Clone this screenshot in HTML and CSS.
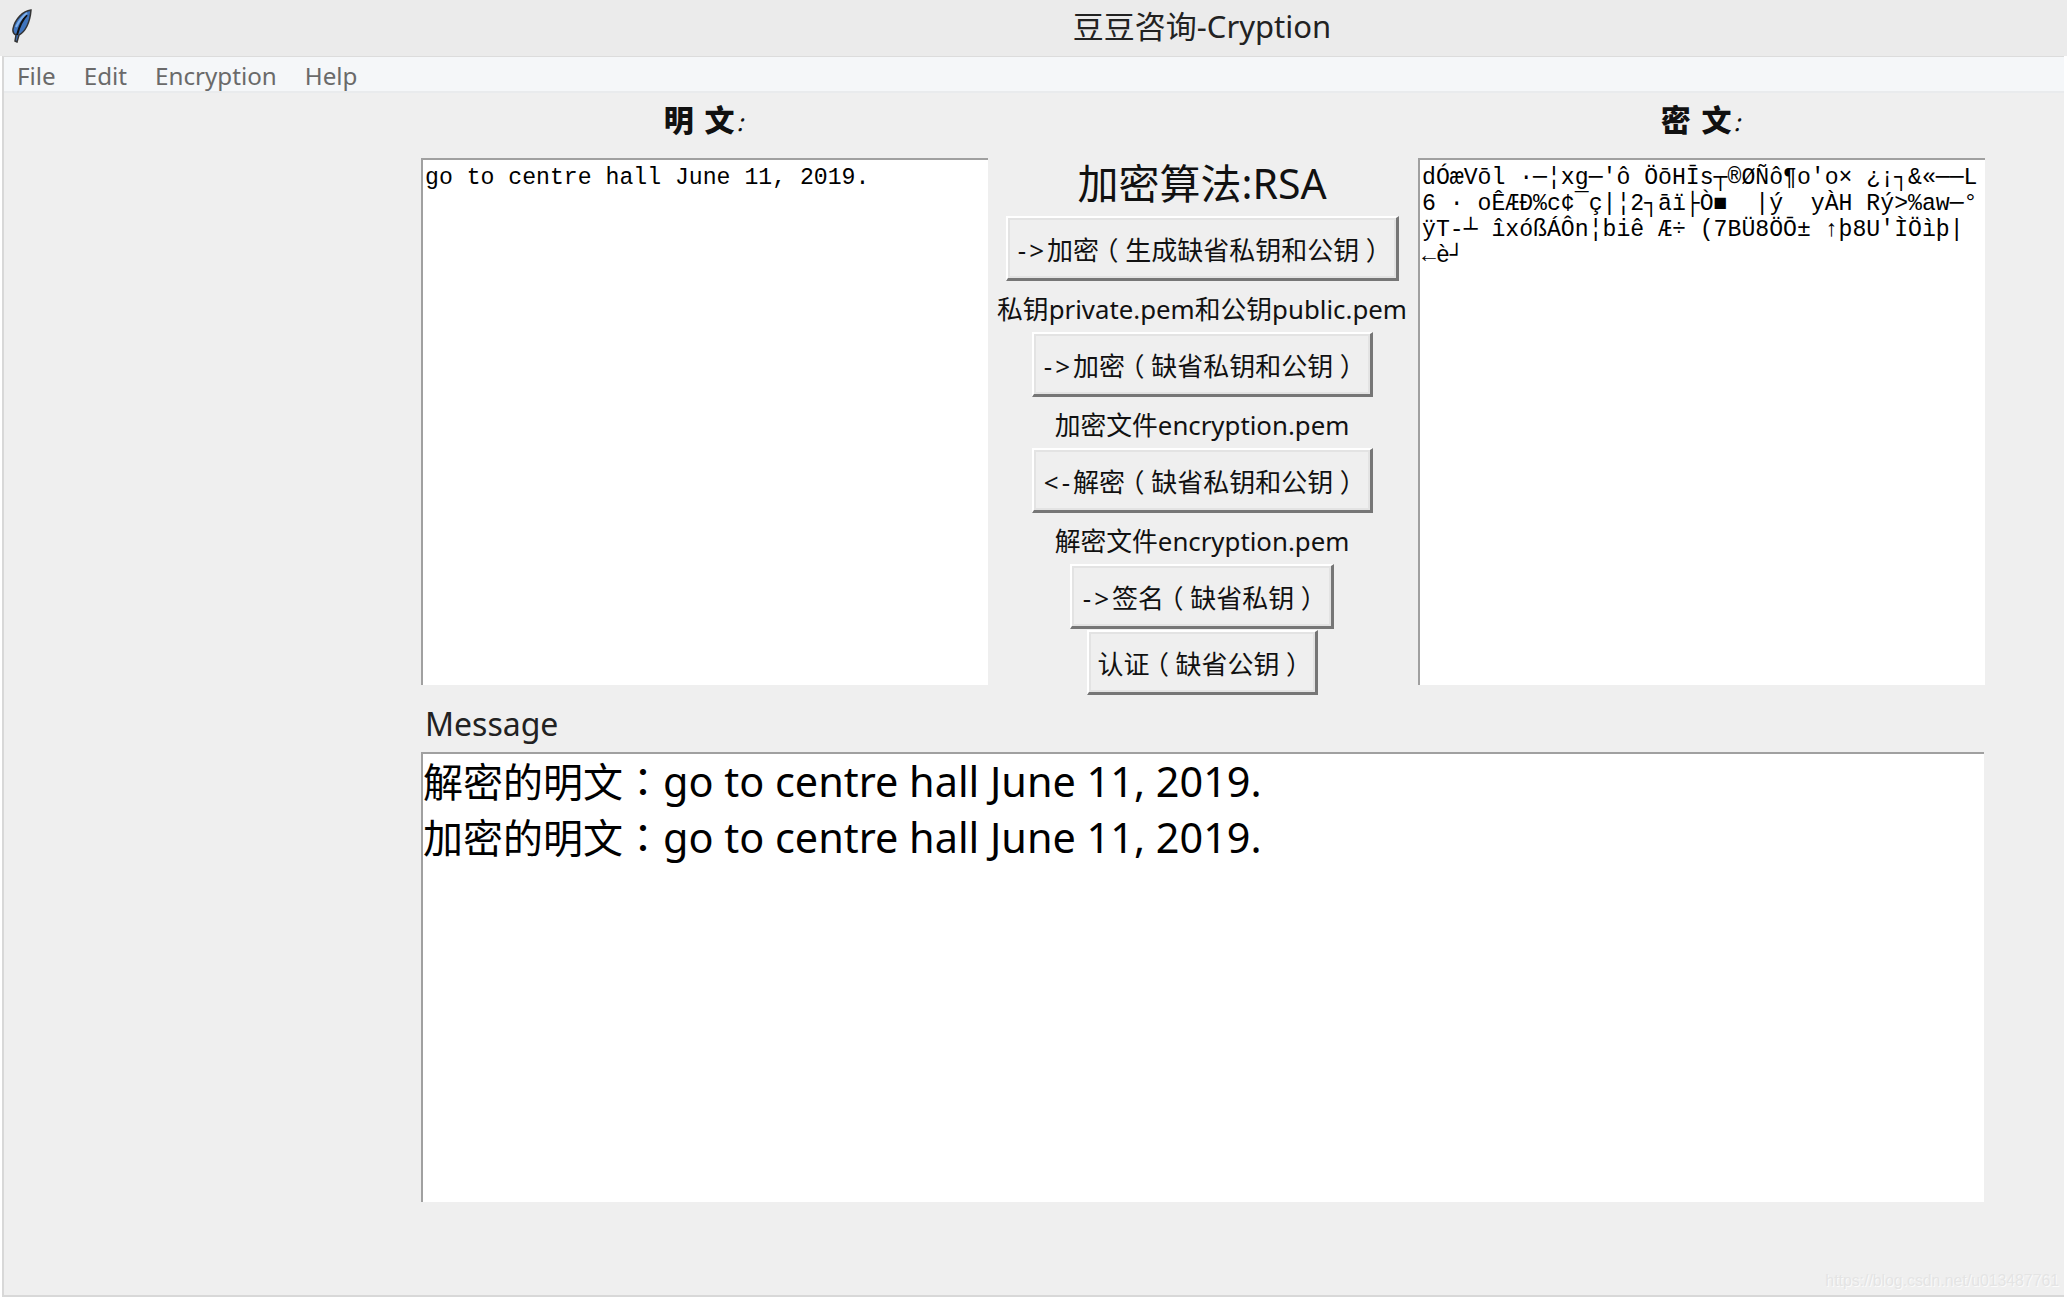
FILE: index.html
```html
<!DOCTYPE html>
<html lang="en">
<head>
    <meta charset="UTF-8">
    <title>豆豆咨询-Cryption</title>
    <link rel="stylesheet" href="styles.css">
</head>
<body>
    <div class="titlebar">
        <svg class="feather" width="22" height="34" viewBox="0 0 22 34">
            <path d="M20 1 C12 2 4 10 2 20 C1.500 23 3 25 5 26 L4 32 L6 33 L8 26 C14 23 19 14 20 1 Z" fill="#3f74bd" stroke="#333" stroke-width="1.500"/>
            <path d="M16 6 C12 10 9 15 6 26" fill="none" stroke="#111" stroke-width="2"/>
            <path d="M16 4 C12 7 8 12 5 18" fill="none" stroke="#7fb0ea" stroke-width="2"/>
        </svg>
        <div class="title">豆豆咨询-Cryption</div>
    </div>
    <div class="window">
        <div class="menubar">
            <span class="menu-item">File</span>
            <span class="menu-item">Edit</span>
            <span class="menu-item">Encryption</span>
            <span class="menu-item">Help</span>
        </div>
        <div class="content">
            <div class="headings">
                <div class="heading">明 文<span class="heading-colon">:</span></div>
                <div></div>
                <div class="heading">密 文<span class="heading-colon">:</span></div>
            </div>
            <div class="panes">
                <pre class="textbox">go to centre hall June 11, 2019.</pre>
                <div class="actions">
                    <div class="algo">加密算法:RSA</div>
                    <button class="btn btn-gen"><span class="arrow">-&gt;</span>加密<span class="paren">（</span>生成缺省私钥和公钥<span class="paren">）</span></button>
                    <div class="note">私钥private.pem和公钥public.pem</div>
                    <button class="btn btn-wide"><span class="arrow">-&gt;</span>加密<span class="paren">（</span>缺省私钥和公钥<span class="paren">）</span></button>
                    <div class="note">加密文件encryption.pem</div>
                    <button class="btn btn-wide"><span class="arrow">&lt;-</span>解密<span class="paren">（</span>缺省私钥和公钥<span class="paren">）</span></button>
                    <div class="note">解密文件encryption.pem</div>
                    <button class="btn btn-sign"><span class="arrow">-&gt;</span>签名<span class="paren">（</span>缺省私钥<span class="paren">）</span></button>
                    <button class="btn btn-verify">认证<span class="paren">（</span>缺省公钥<span class="paren">）</span></button>
                </div>
                <pre class="textbox">dÓæVōl ·─¦xg─'ô ÖōHĪs┬®ØÑô¶o'o× ¿¡┐&amp;«──L
6 · oÊÆÐ%c¢¯ç|¦2┐āï├Ò■  |ý  yÀH Rý&gt;%aw─°
ÿT-┴ îxóßÁÔn¦biê Æ÷ (7BÜ8ÖŌ± ↑þ8U'ÌÖìþ|
←è┘</pre>
            </div>
            <div class="message-label">Message</div>
            <div class="message">
                <div class="message-line">解密的明文<span class="punct">：</span><span class="message-text">go to centre hall June 11, 2019.</span></div>
                <div class="message-line">加密的明文<span class="punct">：</span><span class="message-text">go to centre hall June 11, 2019.</span></div>
            </div>
        </div>
        <div class="watermark">https://blog.csdn.net/u013487761</div>
    </div>
</body>
</html>
```

FILE: styles.css
```css
html, body {
    margin: 0;
    height: 100%;
    background: #fff;
}
body {
    font-family: "Noto Sans", "Noto Sans CJK SC", sans-serif;
    color: #000;
    overflow: hidden;
}
.titlebar {
    height: 56px;
    background: #ebebeb;
    display: flex;
    align-items: center;
}
.feather {
    flex: none;
    margin: 0 0 4px 11px;
}
.title {
    flex: 1;
    padding: 0 0 5px 304px;
    text-align: center;
    font-size: 31px;
    line-height: 40px;
    color: #222;
}
.window {
    position: relative;
    width: 2062px;
    height: 1241px;
    margin-left: 2px;
    box-sizing: border-box;
    background: #efefef;
    border-left: 2px solid #d8d8d8;
    border-top: 1px solid #dcdcdc;
    border-bottom: 2px solid #d8d8d8;
}
.menubar {
    height: 36px;
    background: #f5f7f9;
    border-bottom: 2px solid #e9ebed;
    display: flex;
    align-items: center;
    padding: 2px 0 0 13px;
    gap: 28px;
    font-size: 24.200px;
    color: #6a6a6a;
    box-sizing: border-box;
}
.content {
    padding-left: 417px;
}
.headings {
    display: grid;
    grid-template-columns: 567px 430px 567px;
    height: 65px;
}
.heading {
    text-align: center;
    font-family: "Noto Sans CJK SC", sans-serif;
    font-weight: 900;
    font-size: 30px;
    line-height: 50px;
    letter-spacing: 2px;
    color: #111;
}
.heading-colon {
    font-size: 24px;
    font-weight: 400;
    font-style: italic;
}
.panes {
    display: grid;
    grid-template-columns: 567px 430px 567px;
    grid-template-rows: 527px;
}
.textbox {
    margin: 0;
    background: #fff;
    border-top: 2px solid #a0a0a0;
    border-left: 2px solid #a0a0a0;
    box-sizing: border-box;
    font-family: "Liberation Mono", "Noto Sans CJK SC", monospace;
    font-size: 23.150px;
    line-height: 26px;
    padding: 5px 0 0 2px;
    overflow: hidden;
}
.actions {
    display: flex;
    flex-direction: column;
    align-items: center;
    padding-right: 2px;
    box-sizing: border-box;
}
.algo {
    flex: none;
    height: 58px;
    font-size: 41px;
    line-height: 50px;
    white-space: nowrap;
    color: #111;
}
.note {
    flex: none;
    height: 51px;
    box-sizing: border-box;
    padding-top: 4px;
    font-size: 25.800px;
    line-height: 49px;
    white-space: nowrap;
    color: #111;
}
.btn {
    flex: none;
    height: 65px;
    padding: 2px 0 0;
    background: #efefef;
    font-family: inherit;
    font-size: 26px;
    color: #111;
    white-space: nowrap;
    box-sizing: border-box;
    border-style: solid;
    border-width: 2px 3px 3px 2px;
    border-color: #fff #767676 #767676 #fff;
    box-shadow: inset 2px 2px 0 #e3e3e3, inset -2px -2px 0 #e3e3e3;
}
.arrow {
    letter-spacing: 3px;
}
/* half-width bracket glyph with even margins, so it sits centred in a full cell */
.paren {
    font-feature-settings: "halt";
    margin: 0 0.25em;
}
.punct {
    font-family: "Noto Sans CJK TC", sans-serif;
}
.btn-gen {
    width: 393px;
}
.btn-wide {
    width: 341px;
}
.btn-sign {
    width: 264px;
    margin-bottom: 1px;
}
.btn-verify {
    width: 231px;
}
.message-label {
    height: 67px;
    padding-left: 4px;
    font-size: 32px;
    line-height: 78px;
    color: #222;
}
.message {
    width: 1563px;
    height: 450px;
    background: #fff;
    border-top: 2px solid #a0a0a0;
    border-left: 2px solid #a0a0a0;
    box-sizing: border-box;
    font-size: 40px;
    white-space: nowrap;
}
.message-line {
    height: 56px;
    line-height: 52px;
}
.message-text {
    font-size: 41.400px;
}
.watermark {
    position: absolute;
    right: 5px;
    bottom: 5px;
    font-family: "Liberation Sans", sans-serif;
    font-size: 15.800px;
    color: #e4e4e4;
    text-shadow: 1px 1px 0 #fbfbfb;
}
```
